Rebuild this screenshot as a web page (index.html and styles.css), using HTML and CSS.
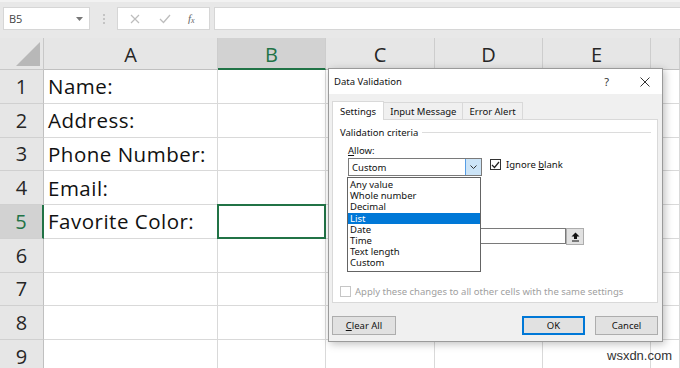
FILE: index.html
```html
<!DOCTYPE html>
<html lang="en">

<head>
  <meta charset="UTF-8">
  <link rel="stylesheet" href="styles.css">
  <title>Data Validation</title>
</head>

<body>
  <div class="toolbar">
    <div class="namebox">
      <span>B5</span>
      <svg class="caret" width="7" height="4" viewBox="0 0 7 4"><path d="M0 0h7L3.5 4z" fill="#777"/></svg>
    </div>
    <div class="grip"><i></i><i></i><i></i></div>
    <div class="fx-buttons">
      <svg width="10" height="10" viewBox="0 0 10 10"><path d="M1 1l8 8M9 1l-8 8" stroke="#bdbdbd" stroke-width="1.2"/></svg>
      <svg width="12" height="10" viewBox="0 0 12 10"><path d="M1 5l3.5 3.5L11 1" stroke="#bdbdbd" stroke-width="1.3" fill="none"/></svg>
      <span class="fx">f<sub>x</sub></span>
    </div>
    <div class="formula"></div>
  </div>

  <div class="sheet">
    <div class="corner"><span></span></div>
    <div class="colhead">A</div>
    <div class="colhead active">B</div>
    <div class="colhead">C</div>
    <div class="colhead">D</div>
    <div class="colhead">E</div>
    <div class="colhead"></div>

    <div class="rowhead">1</div><div class="cell">Name:</div><div class="cell"></div><div class="cell"></div><div class="cell"></div><div class="cell"></div><div class="cell"></div>
    <div class="rowhead">2</div><div class="cell">Address:</div><div class="cell"></div><div class="cell"></div><div class="cell"></div><div class="cell"></div><div class="cell"></div>
    <div class="rowhead">3</div><div class="cell">Phone Number:</div><div class="cell"></div><div class="cell"></div><div class="cell"></div><div class="cell"></div><div class="cell"></div>
    <div class="rowhead">4</div><div class="cell">Email:</div><div class="cell"></div><div class="cell"></div><div class="cell"></div><div class="cell"></div><div class="cell"></div>
    <div class="rowhead active">5</div><div class="cell">Favorite Color:</div><div class="cell selected"></div><div class="cell"></div><div class="cell"></div><div class="cell"></div><div class="cell"></div>
    <div class="rowhead">6</div><div class="cell"></div><div class="cell"></div><div class="cell"></div><div class="cell"></div><div class="cell"></div><div class="cell"></div>
    <div class="rowhead">7</div><div class="cell"></div><div class="cell"></div><div class="cell"></div><div class="cell"></div><div class="cell"></div><div class="cell"></div>
    <div class="rowhead">8</div><div class="cell"></div><div class="cell"></div><div class="cell"></div><div class="cell"></div><div class="cell"></div><div class="cell"></div>
    <div class="rowhead">9</div><div class="cell"></div><div class="cell"></div><div class="cell"></div><div class="cell"></div><div class="cell"></div><div class="cell"></div>
  </div>

  <div class="dialog">
    <div class="titlebar">
      <span class="title">Data Validation</span>
      <span class="help">?</span>
      <svg class="close" width="10" height="10" viewBox="0 0 10 10"><path d="M0.5 0.5l9 9M9.5 0.5l-9 9" stroke="#333" stroke-width="1"/></svg>
    </div>
    <div class="dialog-body">
      <div class="tabs">
        <div class="tab current">Settings</div>
        <div class="tab">Input Message</div>
        <div class="tab">Error Alert</div>
      </div>
      <div class="panel">
        <div class="group-label"><span>Validation criteria</span><i></i></div>
        <div class="field-label"><u>A</u>llow:</div>
        <div class="allow-row">
          <div class="combo">
            <span>Custom</span>
            <div class="combo-btn">
              <svg width="7" height="4" viewBox="0 0 7 4"><path d="M0.5 0.5l3 3 3-3" stroke="#333" fill="none"/></svg>
            </div>
          </div>
          <div class="check checked">
            <svg width="9" height="8" viewBox="0 0 9 8"><path d="M1 4l2.5 2.5L8 1" stroke="#222" stroke-width="1.2" fill="none"/></svg>
          </div>
          <span class="check-label">Ignore <u>b</u>lank</span>
        </div>
        <div class="source-row">
          <div class="source-input"></div>
          <div class="source-btn">
            <svg width="9" height="10" viewBox="0 0 9 10"><path d="M4.5 0.5L8.5 4.5H6V7H3V4.5H0.5z" fill="#111"/><rect x="1" y="8.5" width="7" height="1" fill="#111"/></svg>
          </div>
        </div>
        <div class="apply-row">
          <div class="check disabled"></div>
          <span>Apply these changes to all other cells with the same settings</span>
        </div>
      </div>
      <div class="buttons">
        <div class="btn wide"><u>C</u>lear All</div>
        <div class="spacer"></div>
        <div class="btn default">OK</div>
        <div class="btn">Cancel</div>
      </div>
    </div>

    <ul class="listbox">
      <li>Any value</li>
      <li>Whole number</li>
      <li>Decimal</li>
      <li class="hover">List</li>
      <li>Date</li>
      <li>Time</li>
      <li>Text length</li>
      <li>Custom</li>
    </ul>
  </div>

  <svg class="cursor" width="12" height="18" viewBox="0 0 12 18">
    <path d="M0.5 0.5V14l3.2-3.1 2.2 5 2-0.9-2.2-4.9h4.3z" fill="#fff" stroke="#000" stroke-width="1"/>
  </svg>

  <div class="watermark">wsxdn.com</div>
</body>

</html>
```

FILE: styles.css
```css
body {
  margin: 0;
  padding: 0;
  width: 680px;
  height: 368px;
  overflow: hidden;
  background: #fff;
  font-family: "Open Sans", "Noto Sans", sans-serif;
  position: relative;
}

/* formula bar */

.toolbar {
  height: 38px;
  box-sizing: border-box;
  background: #e8e8e8;
  display: flex;
  align-items: flex-start;
  border-top: 2px solid #f2f2f2;
  padding-top: 5px;
}

.namebox {
  margin-left: 3px;
  width: 87px;
  height: 23px;
  box-sizing: border-box;
  background: #fff;
  border: 1px solid #d6d6d6;
  display: flex;
  align-items: center;
  justify-content: space-between;
  padding: 0 6px 0 5px;
  font-size: 11px;
  color: #444;
}

.grip {
  width: 27px;
  height: 23px;
  display: flex;
  flex-direction: column;
  align-items: center;
  justify-content: center;
  gap: 2px;
}

.grip i {
  width: 2px;
  height: 2px;
  background: #c4c4c4;
}

.fx-buttons {
  width: 93px;
  height: 23px;
  box-sizing: border-box;
  background: #fff;
  border: 1px solid #d6d6d6;
  display: flex;
  align-items: center;
  padding-left: 12px;
  gap: 19px;
}

.fx {
  font-family: "Liberation Serif", serif;
  font-style: italic;
  font-size: 11px;
  color: #666;
  margin-left: -2px;
}

.fx sub {
  font-size: 8px;
  vertical-align: -1px;
}

.formula {
  flex: 1;
  margin-left: 4px;
  height: 23px;
  box-sizing: border-box;
  background: #fff;
  border: 1px solid #d6d6d6;
  border-right: 0;
}

/* grid */

.sheet {
  display: grid;
  grid-template-columns: 44px 174px 108px 109px 108px 108px 1fr;
  grid-template-rows: 32px repeat(9, 33.75px);
}

.corner {
  background: #e6e6e6;
  border-right: 1px solid #c8c8c8;
  border-bottom: 1px solid #c8c8c8;
  position: relative;
}

.corner span {
  position: absolute;
  right: 3px;
  bottom: 3px;
  width: 0;
  height: 0;
  border-left: 24px solid transparent;
  border-bottom: 24px solid #b8b8b8;
}

.colhead {
  background: #e6e6e6;
  border-right: 1px solid #cdcdcd;
  border-bottom: 1px solid #c0c0c0;
  display: flex;
  align-items: center;
  justify-content: center;
  font-size: 20px;
  color: #262626;
  padding-top: 2px;
}

.colhead.active {
  background: #d2d2d2;
  color: #217346;
  border-bottom: 2px solid #217346;
}

.rowhead {
  background: #e6e6e6;
  border-right: 1px solid #c0c0c0;
  border-bottom: 1px solid #d0d0d0;
  display: flex;
  align-items: center;
  justify-content: center;
  font-size: 20px;
  color: #262626;
}

.rowhead.active {
  background: #d2d2d2;
  color: #217346;
  border-right: 2px solid #217346;
}

.cell {
  border-right: 1px solid #d9d9d9;
  border-bottom: 1px solid #d9d9d9;
  font-size: 20.5px;
  letter-spacing: 0.5px;
  color: #111;
  padding-left: 4px;
  display: flex;
  align-items: center;
  white-space: nowrap;
}

.cell.selected {
  border: 2px solid #217346;
  margin: -1px 0 0 -1px;
}

/* dialog */

.dialog {
  position: absolute;
  left: 328px;
  top: 68px;
  width: 335px;
  height: 274px;
  box-sizing: border-box;
  background: #f0f0f0;
  border: 1px solid #9a9a9a;
  box-shadow: 2px 2px 8px rgba(0, 0, 0, 0.25);
  font-family: "Noto Sans", "Open Sans", sans-serif;
  font-size: 9.5px;
  color: #111;
}

.titlebar {
  height: 25px;
  background: #fff;
  display: flex;
  align-items: center;
  padding-left: 5px;
}

.title {
  flex: 1;
}

.help {
  font-size: 11px;
  margin-right: 31px;
  color: #333;
}

.close {
  margin-right: 12px;
}

.dialog-body {
  padding: 7px 4px 0 3px;
}

.tabs {
  display: flex;
  height: 18px;
  align-items: flex-end;
}

.tab {
  height: 17px;
  box-sizing: border-box;
  border: 1px solid #d9d9d9;
  border-bottom: 0;
  padding: 0 6px;
  display: flex;
  align-items: center;
  background: #f0f0f0;
  margin-right: -1px;
}

.tab.current {
  height: 19px;
  background: #fff;
  position: relative;
  z-index: 1;
  margin-bottom: -1px;
  padding: 0 7px;
}

.panel {
  height: 184px;
  box-sizing: border-box;
  background: #fff;
  border: 1px solid #d9d9d9;
  padding: 6px 6px 0 7px;
}

.group-label {
  display: flex;
  align-items: center;
  gap: 4px;
}

.group-label i {
  flex: 1;
  height: 1px;
  background: #dcdcdc;
}

.field-label {
  margin: 5px 0 0 8px;
}

.allow-row {
  display: flex;
  align-items: flex-start;
  margin: 1px 0 0 8px;
}

.combo {
  width: 134px;
  height: 18px;
  box-sizing: border-box;
  border: 1px solid #7a7a7a;
  display: flex;
  align-items: center;
  justify-content: space-between;
  padding-left: 3px;
}

.combo-btn {
  width: 16px;
  height: 16px;
  box-sizing: border-box;
  background: #cce4f7;
  border-left: 1px solid #569de5;
  display: flex;
  align-items: center;
  justify-content: center;
}

.check {
  width: 11px;
  height: 11px;
  box-sizing: border-box;
  border: 1px solid #333;
  background: #fff;
  display: flex;
  align-items: center;
  justify-content: center;
}

.allow-row .check {
  margin: 1px 5px 0 8px;
}

.check-label {
  line-height: 13px;
}

.check.disabled {
  border-color: #c6c6c6;
}

.source-row {
  display: flex;
  margin: 52px 0 0 8px;
}

.source-input {
  width: 218px;
  height: 16px;
  box-sizing: border-box;
  border: 1px solid #7a7a7a;
}

.source-btn {
  width: 18px;
  height: 17px;
  box-sizing: border-box;
  background: #e1e1e1;
  border: 1px solid #adadad;
  display: flex;
  align-items: center;
  justify-content: center;
}

.apply-row {
  display: flex;
  align-items: center;
  gap: 4px;
  margin-top: 40px;
  color: #a0a0a0;
}

.buttons {
  display: flex;
  align-items: center;
  margin-top: 13px;
  gap: 10px;
}

.spacer {
  flex: 1;
}

.btn {
  width: 63px;
  height: 19px;
  box-sizing: border-box;
  background: #e1e1e1;
  border: 1px solid #adadad;
  display: flex;
  align-items: center;
  justify-content: center;
}

.btn.wide {
  width: 64px;
}

.btn.default {
  border: 2px solid #0078d7;
}

.listbox {
  position: absolute;
  left: 18px;
  top: 108px;
  width: 134px;
  margin: 0;
  padding: 1px 0 2px;
  list-style: none;
  box-sizing: border-box;
  background: #fff;
  border: 1px solid #646464;
  z-index: 3;
}

.listbox li {
  height: 11.2px;
  line-height: 11px;
  padding-left: 2px;
}

.listbox li.hover {
  background: #0078d7;
  color: #fff;
}

.cursor {
  position: absolute;
  left: 422px;
  top: 215px;
}

.watermark {
  position: absolute;
  left: 607px;
  top: 348px;
  font-family: "Liberation Sans", sans-serif;
  font-size: 13px;
  color: #333;
}
```
